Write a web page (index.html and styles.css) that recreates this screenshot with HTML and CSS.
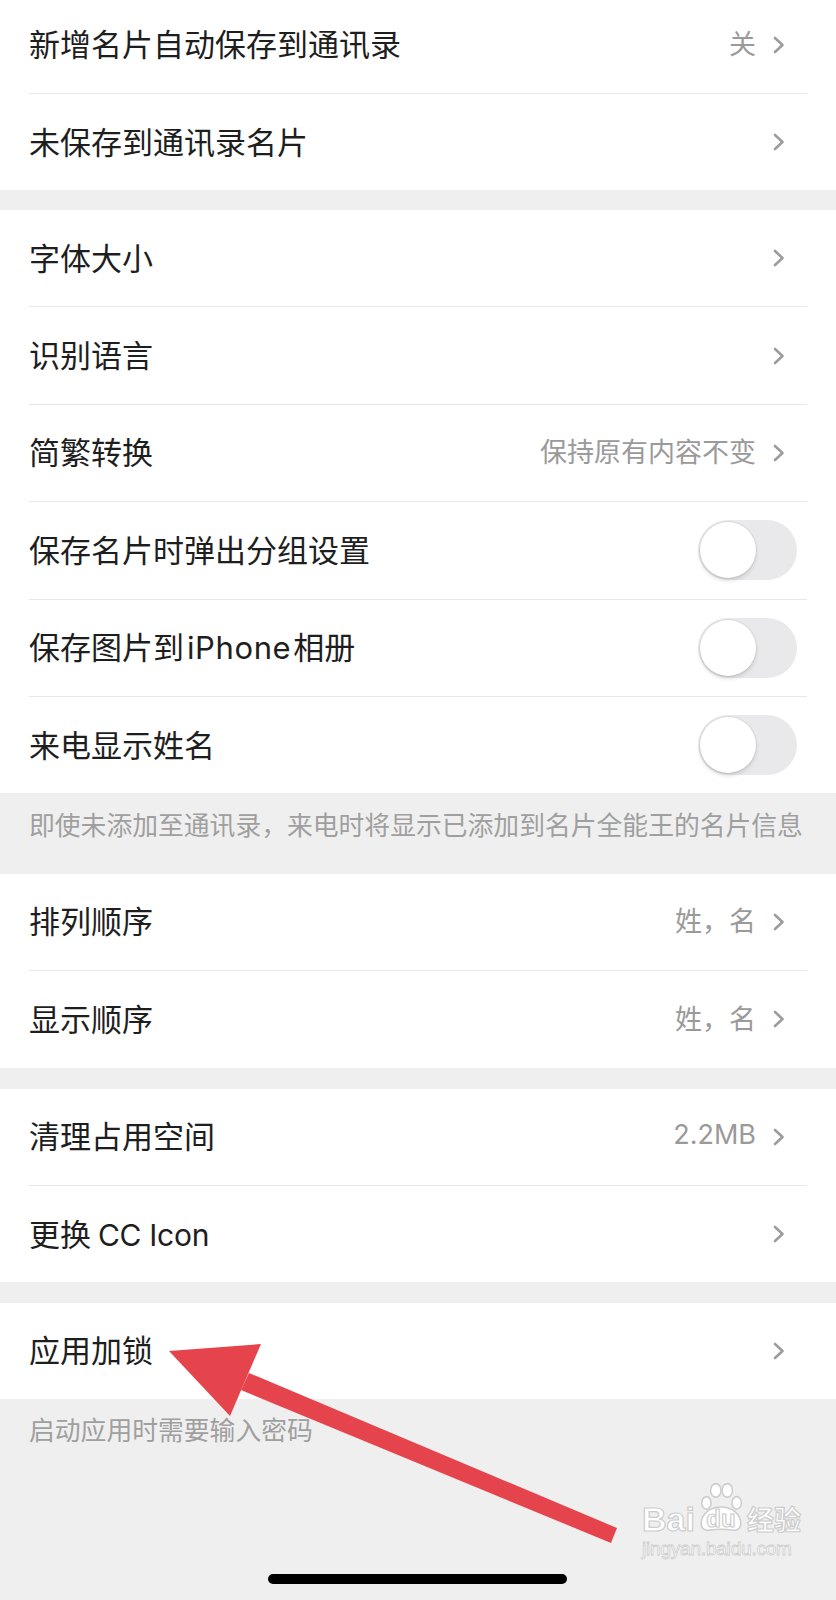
FILE: index.html
```html
<!DOCTYPE html>
<html lang="zh-CN">
<head>
<meta charset="utf-8">
<title>设置</title>
<link rel="stylesheet" href="styles.css">
</head>
<body>
<div class="page">
  <div class="group first">
    <div class="row"><span class="label">新增名片自动保存到通讯录</span><span class="value">关</span><svg class="chev" viewBox="0 0 12 18"><path d="M2 2l7.5 7L2 16"/></svg></div>
    <div class="sep"></div>
    <div class="row"><span class="label">未保存到通讯录名片</span><svg class="chev" viewBox="0 0 12 18"><path d="M2 2l7.5 7L2 16"/></svg></div>
  </div>

  <div class="group g2">
    <div class="row"><span class="label">字体大小</span><svg class="chev" viewBox="0 0 12 18"><path d="M2 2l7.5 7L2 16"/></svg></div>
    <div class="sep"></div>
    <div class="row"><span class="label">识别语言</span><svg class="chev" viewBox="0 0 12 18"><path d="M2 2l7.5 7L2 16"/></svg></div>
    <div class="sep"></div>
    <div class="row"><span class="label">简繁转换</span><span class="value">保持原有内容不变</span><svg class="chev" viewBox="0 0 12 18"><path d="M2 2l7.5 7L2 16"/></svg></div>
    <div class="sep"></div>
    <div class="row"><span class="label">保存名片时弹出分组设置</span><span class="toggle"><span class="knob"></span></span></div>
    <div class="sep"></div>
    <div class="row"><span class="label">保存图片到<span class="latin">iPhone</span>相册</span><span class="toggle"><span class="knob"></span></span></div>
    <div class="sep"></div>
    <div class="row"><span class="label">来电显示姓名</span><span class="toggle"><span class="knob"></span></span></div>
  </div>
  <div class="note note1">即使未添加至通讯录，来电时将显示已添加到名片全能王的名片信息</div>

  <div class="group">
    <div class="row"><span class="label">排列顺序</span><span class="value">姓，名</span><svg class="chev" viewBox="0 0 12 18"><path d="M2 2l7.5 7L2 16"/></svg></div>
    <div class="sep"></div>
    <div class="row"><span class="label">显示顺序</span><span class="value">姓，名</span><svg class="chev" viewBox="0 0 12 18"><path d="M2 2l7.5 7L2 16"/></svg></div>
  </div>

  <div class="group g4">
    <div class="row"><span class="label">清理占用空间</span><span class="value">2.2MB</span><svg class="chev" viewBox="0 0 12 18"><path d="M2 2l7.5 7L2 16"/></svg></div>
    <div class="sep"></div>
    <div class="row"><span class="label">更换<span class="latin-cc">CC Icon</span></span><svg class="chev" viewBox="0 0 12 18"><path d="M2 2l7.5 7L2 16"/></svg></div>
  </div>

  <div class="group g5">
    <div class="row"><span class="label">应用加锁</span><svg class="chev" viewBox="0 0 12 18"><path d="M2 2l7.5 7L2 16"/></svg></div>
  </div>
  <div class="note note2">启动应用时需要输入密码</div>

  <div class="home-bar"></div>

  <svg class="arrow" viewBox="0 0 836 1600" width="836" height="1600">
    <polygon points="249,1373 617,1528 611,1543 241,1390" fill="#e6444c"/>
    <polygon points="169,1351 261,1344 230,1416" fill="#e6444c"/>
  </svg>

  <div class="watermark">
    <div class="wm-line">
      <span class="wm-bai">Bai</span>
      <span class="wm-paw">
        <svg class="paw" viewBox="0 0 48 50">
          <ellipse cx="10" cy="22" rx="4.5" ry="6" />
          <ellipse cx="19" cy="10" rx="5" ry="6.5" />
          <ellipse cx="30" cy="10" rx="5" ry="6.5" />
          <ellipse cx="39" cy="22" rx="4.5" ry="6" />
          <path d="M5 42c0-9 8-16 19-16s19 7 19 16c0 5-4 7-9 6-5-1-15-1-20 0-5 1-9-1-9-6z" />
        </svg>
        <span class="wm-du">du</span>
      </span>
      <span class="wm-jy">经验</span>
    </div>
    <div class="wm-url">jingyan.baidu.com</div>
  </div>
</div>
</body>
</html>
```

FILE: styles.css
```css
html, body {
  margin: 0;
  padding: 0;
}
body {
  background: #efefef;
  font-family: Inter, "Noto Sans CJK SC", sans-serif;
  color: #1e1e1e;
}
.page {
  position: relative;
  width: 836px;
  height: 1600px;
  overflow: hidden;
  background: #efefef;
}
.group {
  background: #ffffff;
  display: flex;
  flex-direction: column;
}
.group.first {
  margin-top: -3.4px;
}
.g2 {
  margin-top: 19.6px;
}
.g4 {
  margin-top: 21px;
}
.g5 {
  margin-top: 20.5px;
}
.row {
  height: 96.4px;
  box-sizing: border-box;
  display: flex;
  align-items: center;
  padding: 0 39px 4px 29px;
}
.label {
  flex: 1;
  font-size: 31px;
  white-space: nowrap;
}
.latin {
  margin: 0 2px 0 3px;
  letter-spacing: 0.6px;
}
.latin-cc {
  margin-left: 7px;
  font-size: 30px;
  letter-spacing: -0.3px;
}
.value {
  font-size: 27px;
  color: #9a9a9a;
  margin-right: 17px;
  white-space: nowrap;
}
.chev {
  width: 12px;
  height: 18px;
  margin-right: 12px;
  margin-top: 4px;
  fill: none;
  stroke: #9c9c9c;
  stroke-width: 2.6;
  stroke-linecap: round;
  stroke-linejoin: round;
}
.sep {
  height: 1px;
  margin: 0 29px;
  background: #e7e7e7;
}
.toggle {
  width: 99px;
  height: 60px;
  margin-top: 4px;
  border-radius: 30px;
  background: #e9e9eb;
  display: flex;
  align-items: center;
  padding-left: 2px;
  box-sizing: border-box;
}
.knob {
  width: 56px;
  height: 56px;
  border-radius: 50%;
  background: #fff;
  box-shadow: 0 0 0 1px rgba(0,0,0,0.06), 0 3px 4px rgba(0,0,0,0.12);
}
.note {
  font-size: 25.8px;
  color: #9f9f9f;
  line-height: 28px;
  padding-left: 29px;
  white-space: nowrap;
}
.note1 {
  height: 80.4px;
  box-sizing: border-box;
  padding-top: 19px;
}
.note2 {
  padding-top: 18px;
}
.home-bar {
  position: absolute;
  left: 268px;
  top: 1574px;
  width: 299px;
  height: 10px;
  border-radius: 5px;
  background: #000;
}
.arrow {
  position: absolute;
  left: 0;
  top: 0;
  pointer-events: none;
}
.watermark {
  position: absolute;
  left: 642px;
  top: 1478px;
  width: 166px;
  color: #fff;
  font-family: "Liberation Sans", Arial, sans-serif;
  font-weight: bold;
}
.wm-line {
  display: flex;
  align-items: flex-end;
  height: 56px;
}
.wm-bai,
.wm-du,
.wm-jy {
  font-size: 34px;
  line-height: 30px;
  -webkit-text-stroke: 1.2px #cdcdcd;
  color: #fff;
}
.wm-jy {
  font-family: "Noto Sans CJK SC", sans-serif;
  font-size: 27px;
  line-height: 30px;
  margin-left: 1px;
}
.wm-paw {
  position: relative;
  display: flex;
  justify-content: center;
  align-items: flex-end;
  width: 50px;
  height: 56px;
  margin-left: 1px;
}
.paw {
  position: absolute;
  left: 0;
  top: 0;
  width: 50px;
  height: 56px;
  fill: #fff;
  stroke: #cdcdcd;
  stroke-width: 1.5;
}
.wm-du {
  position: relative;
  font-size: 24px;
  line-height: 24px;
  margin-bottom: 3px;
}
.wm-url {
  font-family: "Liberation Sans Narrow", "Liberation Sans", sans-serif;
  font-weight: normal;
  font-size: 19px;
  line-height: 22px;
  margin-top: 4px;
  color: #fff;
  -webkit-text-stroke: 0.8px #cdcdcd;
  letter-spacing: -0.2px;
}
```
